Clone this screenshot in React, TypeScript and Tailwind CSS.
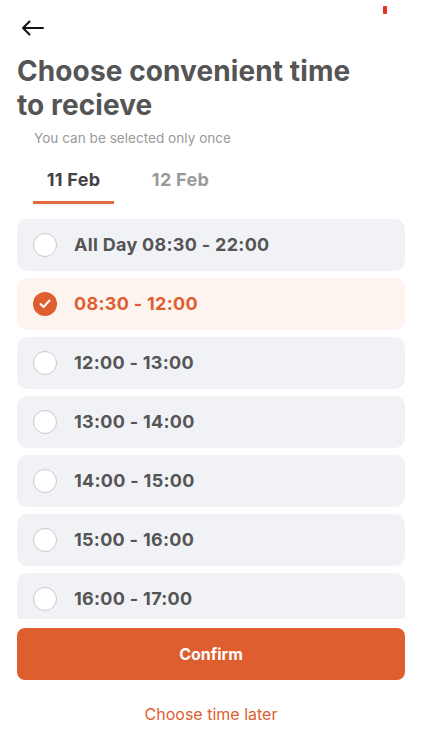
import { useState } from 'react';

const slots = [
  'All Day 08:30 - 22:00',
  '08:30 - 12:00',
  '12:00 - 13:00',
  '13:00 - 14:00',
  '14:00 - 15:00',
  '15:00 - 16:00',
  '16:00 - 17:00',
];

export default function App() {
  const [tab, setTab] = useState(0);
  const [selected, setSelected] = useState(1);

  return (
    <div className="relative flex h-[750px] w-[422px] flex-col bg-white font-['Inter',sans-serif]">
      <div className="absolute right-[35px] top-[6px] h-[8px] w-[4px] rounded-[1px] bg-[#e8302a]" />
      <div className="flex h-[54px] items-center px-[21px] pt-[2px]">
        <svg width="23" height="16" viewBox="0 0 23 16" fill="none" stroke="#111" strokeWidth="2" strokeLinecap="round" strokeLinejoin="round">
          <path d="M22 8H2M8.5 1.5 2 8l6.5 6.5" />
        </svg>
      </div>
      <h1 className="px-[17px] text-[28px] font-bold leading-[34px] tracking-[0.1px] text-[#555]">
        Choose convenient time
        <br />
        to recieve
      </h1>
      <p className="mt-[6px] pl-[34px] text-[13.6px] leading-[20px] text-[#999]">You can be selected only once</p>
      <div className="mt-[20px] flex px-[33px]">
        {['11 Feb', '12 Feb'].map((t, i) => (
          <button
            key={t}
            onClick={() => setTab(i)}
            className={`flex h-[36px] w-[81px] flex-col items-center justify-start text-[18px] font-bold tracking-[0.3px] ${
              i === 0 ? '' : 'ml-[26px]'
            } ${tab === i ? 'text-[#444]' : 'text-[#999]'}`}
          >
            <span className="leading-[24px]">{t}</span>
            <span className={`mt-auto h-[3px] w-full ${tab === i ? 'bg-[#df6a3c]' : 'bg-transparent'}`} />
          </button>
        ))}
      </div>
      <div className="mt-[15px] flex h-[400px] flex-col gap-[7px] overflow-hidden px-[17px]">
        {slots.map((s, i) => {
          const on = selected === i;
          return (
            <button
              key={s}
              onClick={() => setSelected(i)}
              className={`flex h-[52px] shrink-0 items-center rounded-[10px] pl-[16px] ${on ? 'bg-[#fdf3ef]' : 'bg-[#f1f2f6]'}`}
            >
              {on ? (
                <span className="flex h-[24px] w-[24px] items-center justify-center rounded-full bg-[#df5e2f]">
                  <svg width="12" height="10" viewBox="0 0 12 10" fill="none" stroke="white" strokeWidth="2" strokeLinecap="round" strokeLinejoin="round">
                    <path d="M1.5 5 4.5 8 10.5 1.5" />
                  </svg>
                </span>
              ) : (
                <span className="h-[24px] w-[24px] rounded-full border border-[#c9c9cc] bg-white" />
              )}
              <span className={`ml-[17px] text-[18px] font-bold leading-[24px] tracking-[0.3px] ${on ? 'text-[#df5e2f]' : 'text-[#555]'}`}>{s}</span>
            </button>
          );
        })}
      </div>
      <div className="px-[17px] pt-[9px]">
        <button className="flex h-[52px] w-full items-center justify-center rounded-[8px] bg-[#df5e2f] text-[16px] font-bold leading-[22px] text-white">
          Confirm
        </button>
      </div>
      <button className="mt-[22px] self-center text-[16px] leading-[24px] text-[#df5e2f]">Choose time later</button>
    </div>
  );
}
